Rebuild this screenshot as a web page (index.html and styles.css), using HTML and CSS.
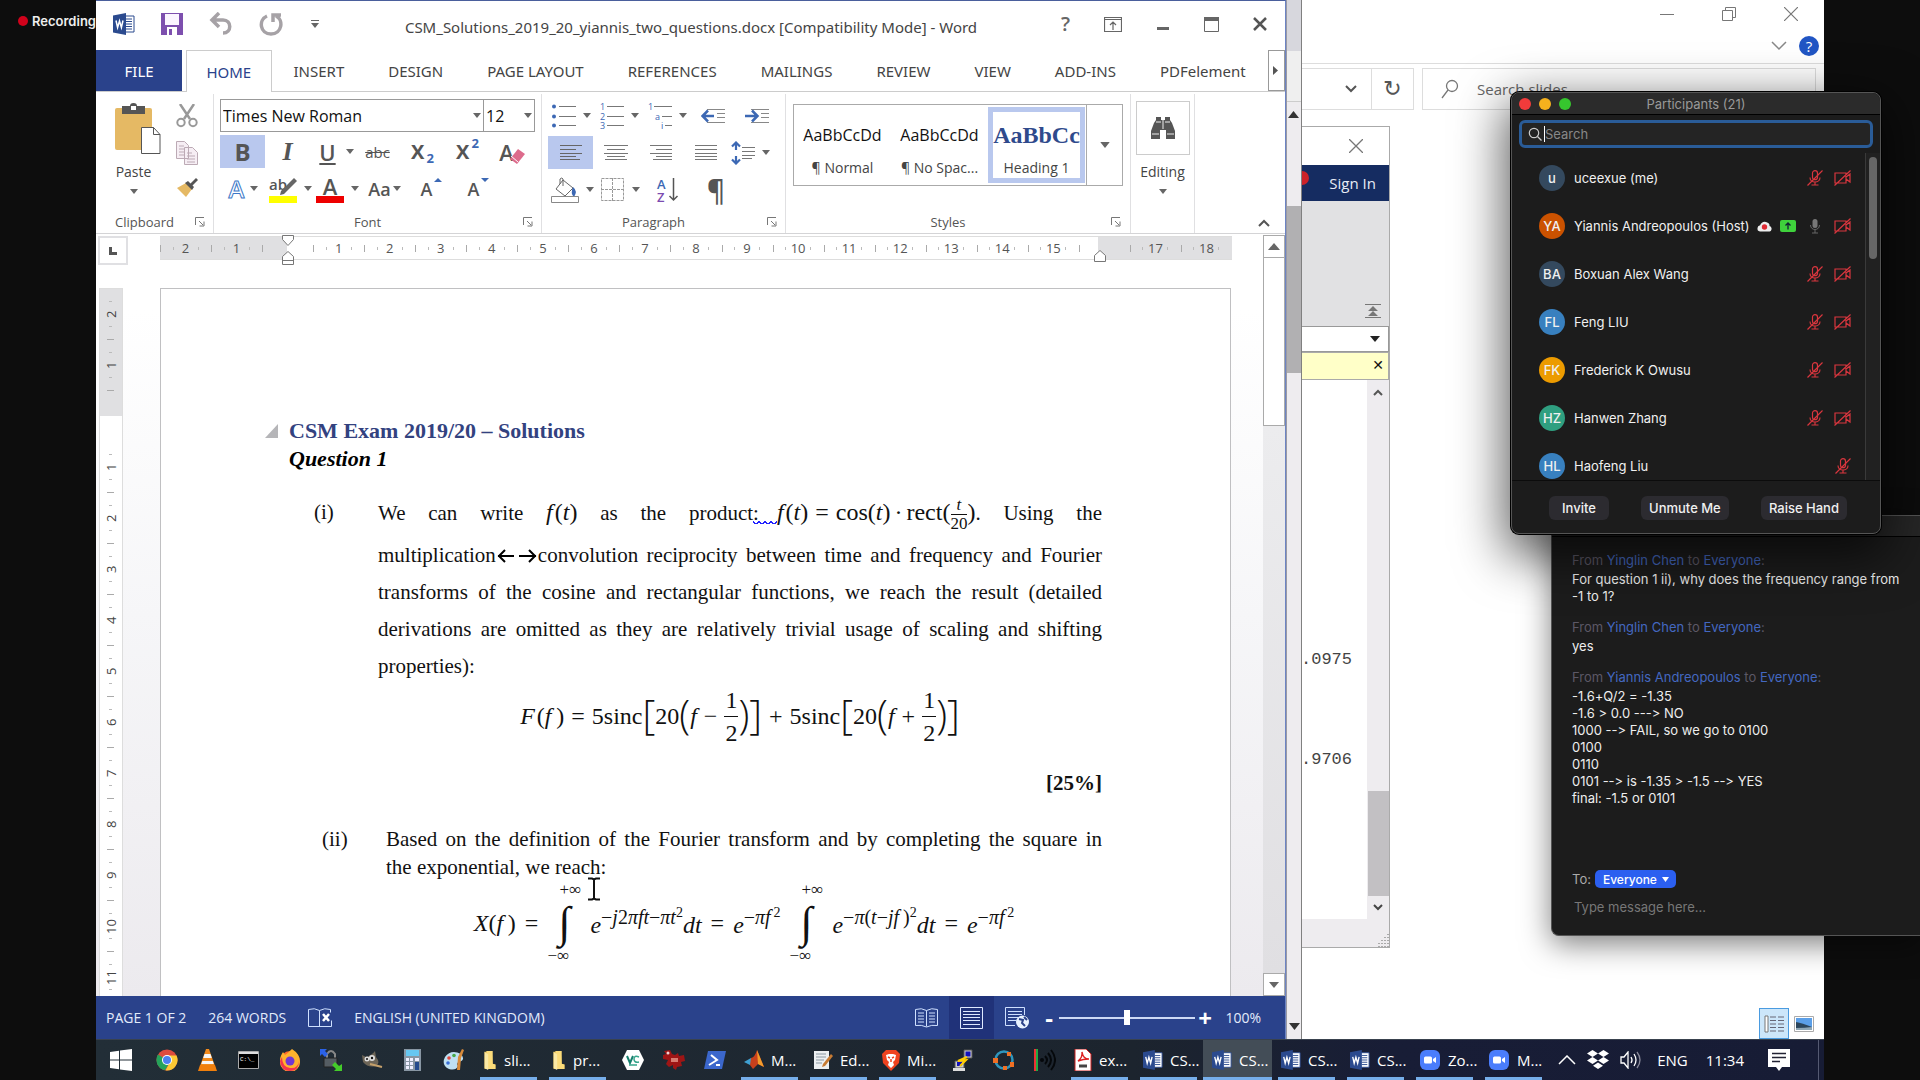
FILE: index.html
```html
<!DOCTYPE html>
<html lang="en">
<head>
<meta charset="utf-8">
<title>Shared screen</title>
<link rel="stylesheet" href="styles.css">
</head>
<body>
<svg width="0" height="0" class="defs" aria-hidden="true">
  <symbol id="down" viewBox="0 0 8 5"><path d="M0 0h8L4 5z" fill="#666"/></symbol>
  <symbol id="launch" viewBox="0 0 10 10"><path d="M.5 8V.5H9M4 4l4 4M9 4.500V9H4.500" fill="none" stroke="#777"/></symbol>
  <symbol id="word" viewBox="0 0 22 22"><path d="M12 3h9v16h-9z" fill="#fff" stroke="#2b4a8e"/><path d="M13 6h6M13 8.500h6M13 11h6M13 13.500h6M13 16h6" stroke="#2b4a8e"/><path d="M0 2.500 13 0v22L0 19.500z" fill="#2b4a8e"/><path d="M3 7.500l1.600 7L6.500 8l1.900 6.500 1.600-7" fill="none" stroke="#fff" stroke-width="1.500"/></symbol>
  <symbol id="folder" viewBox="0 0 14 22"><path d="M1 2h8l1 14h3v5H1z" fill="#e8b93f"/><path d="M3 1h7v14l3 1v5H3z" fill="#fbdc7a"/><path d="M1 2l4 3v17l-4-2z" fill="#fbe9a5"/></symbol>
  <symbol id="zoomapp" viewBox="0 0 22 22"><rect x="1" y="1" width="20" height="20" rx="6" fill="#4a7dfc"/><rect x="5" y="7.500" width="8" height="7" rx="1.500" fill="#fff"/><path d="M14 10l3-2v6l-3-2z" fill="#fff"/></symbol>
  <symbol id="micoff" viewBox="0 0 16 16"><g fill="none" stroke="#d9363e" stroke-width="1.200"><rect x="5.500" y=".7" width="5" height="9" rx="2.500"/><path d="M3 7.500c0 6 10 6 10 0M8 12v3M4.500 15h7M.5 15.500l15-15"/></g></symbol>
  <symbol id="vidoff" viewBox="0 0 17 16"><g fill="none" stroke="#d9363e" stroke-width="1.200"><path d="M1 3h11v10H1zM12 7l4-3v8l-4-3M.5 15.500l16-15"/></g></symbol>
</svg>

<aside class="rec"><span class="rec-dot"></span>Recording</aside>

<main class="desktop">
  <section class="win explorer">
    <header class="ex-title">
      <svg width="14" height="14"><path d="M0 7.500h14" stroke="#777"/></svg>
      <svg width="14" height="14"><path d="M.5 3.500h10v10H.5zM3.500 3V.5h10v10H11" fill="none" stroke="#777"/></svg>
      <svg width="14" height="14"><path d="M0 0l14 14M14 0L0 14" stroke="#777" stroke-width="1.200"/></svg>
    </header>
    <div class="ex-help">
      <svg width="16" height="10"><path d="M1 1l7 7 7-7" fill="none" stroke="#888" stroke-width="1.500"/></svg>
      <button class="help-dot">?</button>
    </div>
    <div class="ex-address">
      <div class="ex-path"><svg width="12" height="8"><path d="M1 1l5 5 5-5" fill="none" stroke="#555" stroke-width="2"/></svg></div>
      <button class="ex-refresh">↻</button>
      <label class="ex-search"><svg width="18" height="20"><circle cx="11" cy="7" r="5.500" fill="none" stroke="#777" stroke-width="1.300"/><path d="M7 11l-6 8" stroke="#777" stroke-width="1.300"/></svg><input type="text" value="Search slides" aria-label="Search slides"></label>
    </div>
    <footer class="ex-views">
      <span class="view-list"><svg width="20" height="20"><path d="M1 2h3v16H1z" fill="#fff" stroke="#777"/><path d="M6 3h6M14 3h6M6 6.500h6M14 6.500h6M6 10h6M14 10h6M6 13.500h6M14 13.500h6M6 17h6M14 17h6" stroke="#667"/></svg></span>
      <svg width="20" height="16"><path d="M.5.5h19v15H.5z" fill="#fff" stroke="#aaa"/><path d="M2 2h16v12H2z" fill="#5b9fe8"/><path d="M2 6q6 1 16 5v3H2z" fill="#2c465c"/><path d="M2 12q9 0 16-1v3H2z" fill="#8fa7b6"/></svg>
    </footer>
  </section>

  <section class="win matlab">
    <header class="ml-title"><svg width="14" height="14"><path d="M0 0l14 14M14 0L0 14" stroke="#777" stroke-width="1.300"/></svg></header>
    <div class="ml-sign"><i></i>Sign In</div>
    <div class="ml-tools"><svg width="16" height="14"><path d="M0 .5h16M0 13.500h16" stroke="#777"/><path d="M8 2l5 5H3zM8 7l5 5H3z" fill="#777"/></svg></div>
    <div class="ml-combo"><svg width="10" height="6"><path d="M0 0h10L5 6z" fill="#222"/></svg></div>
    <div class="ml-note">✕</div>
    <div class="ml-body">
      <div class="ml-out"><p>.0975</p><p>.9706</p></div>
      <div class="ml-scroll">
        <svg width="10" height="7"><path d="M1 6l4-4 4 4" fill="none" stroke="#555" stroke-width="2"/></svg>
        <span class="ml-thumb"></span>
        <svg width="10" height="7"><path d="M1 1l4 4 4-4" fill="none" stroke="#444" stroke-width="2"/></svg>
      </div>
    </div>
    <footer class="ml-foot"><svg width="14" height="14"><path d="M13 1v13M10 4v10M7 7v7M4 10v4" stroke="#aaa" stroke-width="2" stroke-dasharray="1 2"/></svg></footer>
  </section>

  <div class="win sliver">
    <span class="sl-a"></span><span class="sl-b"></span>
    <span class="sl-arrow"><svg width="11" height="7"><path d="M0 7h11L5.500 0z" fill="#333"/></svg></span>
    <span class="sl-thumb"></span><span class="sl-rest"></span>
    <svg width="11" height="7"><path d="M0 0h11L5.500 7z" fill="#333"/></svg>
  </div>

  <section class="win wordwin">
    <header class="w-title">
      <div class="qat">
        <svg width="22" height="22"><use href="#word"/></svg>
        <svg width="22" height="22"><path d="M0 0h22v22H0z" fill="#7d4fae"/><path d="M4 1h14v11H4z" fill="#fbf5ff"/><path d="M6 14h10v8H6z" fill="#fff"/><path d="M8 16h3v6H8z" fill="#7d4fae"/></svg>
        <svg width="24" height="24"><path d="M3 8h11c9 0 9 13 0 13M10 1L3 8l7 7" fill="none" stroke="#a6a2a6" stroke-width="3.500"/></svg>
        <svg width="24" height="24"><path d="M8 4C-1 8 1 22 12 22S25 8 17 4M14 10V3h8" fill="none" stroke="#a6a2a6" stroke-width="3.500"/></svg>
        <svg width="8" height="8" class="qat-more"><path d="M0 .5h8" stroke="#666"/><path d="M0 3h8L4 8z" fill="#666"/></svg>
      </div>
      <h1>CSM_Solutions_2019_20_yiannis_two_questions.docx [Compatibility Mode] - Word</h1>
      <div class="w-ctl">
        <span>?</span>
        <svg width="18" height="15"><path d="M.5.5h17v14H.5zM.5 2.500h17M9 13V5M6 8l3-3 3 3" fill="none" stroke="#666" stroke-width="1.200"/></svg>
        <svg width="14" height="15"><path d="M1 11.500h12" stroke="#666" stroke-width="3"/></svg>
        <svg width="15" height="15"><path d="M.5.5h14v14H.5z" fill="none" stroke="#666"/><path d="M0 0h15v4H0z" fill="#666"/></svg>
        <svg width="14" height="14"><path d="M1 1l12 12M13 1L1 13" stroke="#555" stroke-width="2.500"/></svg>
      </div>
    </header>
    <nav class="tabs">
      <button class="tab file">FILE</button><button class="tab home">HOME</button><button class="tab">INSERT</button><button class="tab">DESIGN</button><button class="tab">PAGE LAYOUT</button><button class="tab">REFERENCES</button><button class="tab">MAILINGS</button><button class="tab">REVIEW</button><button class="tab">VIEW</button><button class="tab">ADD-INS</button><button class="tab">PDFelement</button>
      <button class="tab-more" aria-label="More tabs"><svg width="6" height="9"><path d="M0 0v9l5-4.500z" fill="#555"/></svg></button>
    </nav>

    <div class="ribbon">
      <section class="group clip">
        <div class="g-body clip-body">
          <button class="big">
            <svg width="46" height="52"><rect x="0" y="5" width="37" height="42" rx="2" fill="#e5b964"/><path d="M7 3h8q0-3 3.500-3T22 3h8v8H7z" fill="#555"/><path d="M16 3h5v4h-5z" fill="#fff"/><path d="M26.500 24.500h12l6.500 7v19H26.500zM38.500 24.500v7H45" fill="#fff" stroke="#555"/></svg>
            <span>Paste</span><svg width="8" height="5"><use href="#down"/></svg>
          </button>
          <div class="clip-side">
            <svg width="22" height="24"><path d="M4 0l10 15M18 0L8 15" stroke="#999" stroke-width="2.500"/><circle cx="5" cy="18.500" r="3.700" fill="none" stroke="#999" stroke-width="2"/><circle cx="17" cy="18.500" r="3.700" fill="none" stroke="#999" stroke-width="2"/></svg>
            <svg width="22" height="24"><path d="M.5.5h8l4 4v13H.5zM8.500 6.500h8l5 5v12h-13z" fill="#f6eef4" stroke="#bcaab5"/><path d="M3 5h5M3 8h5M3 11h5M3 14h5M11 12h5M11 15h8M11 18h8M11 21h8" stroke="#bcaab5"/></svg>
            <svg width="22" height="20"><path d="M1 10l9-5 6 6-6 8z" fill="#e5b964"/><path d="M9 5l3-2 6 6-2 3z" fill="#555"/><path d="M14 6l6-6 2 2-6 6z" fill="#555"/></svg>
          </div>
        </div>
        <footer>Clipboard<svg width="10" height="10"><use href="#launch"/></svg></footer>
      </section>

      <section class="group font">
        <div class="g-body">
          <div class="combos">
            <div class="combo wide"><input type="text" value="Times New Roman" aria-label="Font"><svg width="8" height="5"><use href="#down"/></svg></div>
            <div class="combo"><input type="text" value="12" aria-label="Font size"><svg width="8" height="5"><use href="#down"/></svg></div>
          </div>
          <div class="tools t45">
            <button class="on gl b">B</button>
            <button class="gl i">I</button>
            <button class="gl u"><u>U</u><svg width="8" height="5"><use href="#down"/></svg></button>
            <button class="gl s"><s>abc</s></button>
            <button class="gl x">X<sub>2</sub></button>
            <button class="gl x">X<sup>2</sup></button>
            <button class="gl er">A<svg width="18" height="18"><path d="M10 2l7 5-8 10-7-5z" fill="#dd6b8c"/><path d="M3 9l7 6" stroke="#fff"/></svg></button>
          </div>
          <div class="tools t47">
            <button class="gl fx">A<svg width="8" height="5"><use href="#down"/></svg></button>
            <button><svg width="28" height="28" class="ic"><text x="0" y="15" class="abt">ab</text><path d="M25 3l3 3-13 13-4 1 1-4z" fill="#666"/><path d="M0 21h28v7H0z" fill="#ff0"/></svg><svg width="8" height="5"><use href="#down"/></svg></button>
            <button class="gl fc"><span>A</span><svg width="8" height="5"><use href="#down"/></svg></button>
            <button class="gl m">Aa<svg width="8" height="5"><use href="#down"/></svg></button>
            <button class="gl m">A<svg width="8" height="24"><path d="M0 5h8L4 1z" fill="#3c68b4"/></svg></button>
            <button class="gl m">A<svg width="8" height="24"><path d="M0 1h8L4 5z" fill="#3c68b4"/></svg></button>
          </div>
        </div>
        <footer>Font<svg width="10" height="10"><use href="#launch"/></svg></footer>
      </section>

      <section class="group para">
        <div class="g-body">
          <div class="tools t48 r1">
            <button><svg width="24" height="24"><path d="M7 2.500h17M7 12.500h17M7 21.500h17" stroke="#777"/><g fill="#3c68b4"><circle cx="2" cy="2.500" r="2"/><circle cx="2" cy="12.500" r="2"/><circle cx="2" cy="21.500" r="2"/></g></svg><svg width="8" height="5"><use href="#down"/></svg></button>
            <button><svg width="24" height="26" class="num"><path d="M7 3.500h17M7 13.500h17M7 22.500h17" stroke="#777"/><text x="0" y="7">1</text><text x="0" y="17">2</text><text x="0" y="26">3</text></svg><svg width="8" height="5"><use href="#down"/></svg></button>
            <button><svg width="24" height="26" class="num"><path d="M6 3.500h18M14 13.500h10M17 22.500h7" stroke="#777"/><text x="0" y="7">1</text><text x="7" y="17">a</text><text x="13" y="26">i</text></svg><svg width="8" height="5"><use href="#down"/></svg></button>
            <button class="n44"><svg width="24" height="16"><path d="M6 1.500h18M16 5.500h8M16 9.500h8M6 14.500h18" stroke="#888"/><path d="M13 8H2M7 2.500L1.500 8 7 13.500" fill="none" stroke="#3c68b4" stroke-width="2.500"/></svg></button>
            <button class="n44"><svg width="24" height="16"><path d="M6 1.500h18M16 5.500h8M16 9.500h8M6 14.500h18" stroke="#888"/><path d="M0 8h12M7 2.500L12.500 8 7 13.500" fill="none" stroke="#3c68b4" stroke-width="2.500"/></svg></button>
          </div>
          <div class="tools t45">
            <button class="on"><svg width="22" height="16"><path d="M0 .5h22M0 4.500h16M0 8.500h22M0 11.500h16M0 14.500h20" stroke="#666"/></svg></button>
            <button><svg width="24" height="16"><path d="M0 .5h24M3 4.500h18M0 8.500h24M3 11.500h18M1 14.500h22" stroke="#777"/></svg></button>
            <button><svg width="22" height="16"><path d="M0 .5h22M6 4.500h16M0 8.500h22M6 11.500h16M3 14.500h19" stroke="#777"/></svg></button>
            <button><svg width="22" height="16"><path d="M0 .5h22M0 4.500h22M0 8.500h22M0 11.500h22M0 14.500h22" stroke="#777"/></svg></button>
            <button><svg width="24" height="24"><path d="M11 6.500h13M11 10.500h13M11 14.500h13M11 17.500h10" stroke="#777"/><path d="M5 1v8M5 15v8M1 5.500L5 1.500l4 4M1 18.500l4 4 4-4" fill="none" stroke="#3c68b4" stroke-width="2.200"/></svg><svg width="8" height="5"><use href="#down"/></svg></button>
          </div>
          <div class="tools t48">
            <button><svg width="28" height="26"><path d="M12 3l10 8-8 8-9-7zM12 9V2q-1-2-3 0v5" fill="#fff" stroke="#666"/><path d="M22 10q5 4 1 10-4-3-1-10z" fill="#3c68b4"/><path d="M.5 19.500h27v6H.5z" fill="#fff" stroke="#888"/></svg><svg width="8" height="5"><use href="#down"/></svg></button>
            <button><svg width="24" height="24"><path d="M.5.5h22v22H.5zM11.500 0v23M0 11.500h23" fill="none" stroke="#999" stroke-dasharray="3 1"/></svg><svg width="8" height="5"><use href="#down"/></svg></button>
            <button><svg width="22" height="26" class="srt"><text x="0" y="12" fill="#3c68b4">A</text><text x="0" y="25" fill="#7b4bb0">Z</text><path d="M16.500 1v22M12.500 19l4 4 4-4" fill="none" stroke="#555" stroke-width="1.500"/></svg></button>
            <button class="gl pil">¶</button>
          </div>
        </div>
        <footer>Paragraph<svg width="10" height="10"><use href="#launch"/></svg></footer>
      </section>

      <section class="group styles">
        <div class="g-body">
          <div class="gallery">
            <button><b class="norm">AaBbCcDd</b><span>¶ Normal</span></button>
            <button><b class="norm">AaBbCcDd</b><span>¶ No Spac...</span></button>
            <button class="sel"><b>AaBbCc</b><span>Heading 1</span></button>
            <button class="g-more" aria-label="More styles"><svg width="10" height="6" viewBox="0 0 8 5"><use href="#down"/></svg></button>
          </div>
        </div>
        <footer>Styles<svg width="10" height="10"><use href="#launch"/></svg></footer>
      </section>

      <section class="group edit">
        <button class="big">
          <span class="bino"><svg width="24" height="22"><path d="M5 0h5v3h4V0h5v3l2 3 3 8v8h-9v-9H9v9H0v-8l3-8 2-3z" fill="#555"/><path d="M12 3v9M5 5h5M14 5h5M1 17h7M16 17h7" stroke="#eee"/></svg></span>
          <span>Editing</span><svg width="8" height="5"><use href="#down"/></svg>
        </button>
      </section>
      <button class="collapse" aria-label="Collapse ribbon"><svg width="12" height="8"><path d="M1 7l5-5 5 5" fill="none" stroke="#555" stroke-width="2"/></svg></button>
    </div>

    <div class="work">
      <div class="tabbox"><svg width="8" height="8"><path d="M1.500 0v6.500H8" fill="none" stroke="#555" stroke-width="3"/></svg></div>
      <div class="hruler"><div class="cells"><i class="g">2</i><i class="g">1</i><i class="g half"></i><i>1</i><i>2</i><i>3</i><i>4</i><i>5</i><i>6</i><i>7</i><i>8</i><i>9</i><i>10</i><i>11</i><i>12</i><i>13</i><i>14</i><i>15</i><i class="g end"></i><i class="g">17</i><i class="g">18</i></div>
        <svg class="mk mk-l" width="12" height="32"><path d="M.5.5h11v4L6 10.500.5 4.500zM6 16.500l5.500 5v8H.5v-8zM.5 25.500h11" fill="#fff" stroke="#777"/></svg>
        <svg class="mk mk-r" width="12" height="12"><path d="M6 .5l5.500 5v6H.5v-6z" fill="#fff" stroke="#777"/></svg>
      </div>
      <div class="vruler"><i class="g">2</i><i class="g">1</i><i class="half"></i><i>1</i><i>2</i><i>3</i><i>4</i><i>5</i><i>6</i><i>7</i><i>8</i><i>9</i><i>10</i><i>11</i></div>
      <article class="page">
        <h2><svg width="13" height="14"><path d="M13 0v14H0z" fill="#b5b5b8"/></svg>CSM Exam 2019/20 – Solutions</h2>
        <h3>Question 1</h3>
        <div class="item">
          <span class="mark">(i)</span>
          <div class="txt">
            <p class="j first">We can write <span class="m"><em>f</em>&hairsp;(<em>t</em>)</span> as the product<span class="wavy">:<span class="gap"></span></span><span class="m"><em>f</em>&hairsp;(<em>t</em>)<span class="op">=</span>cos(<em>t</em>)<span class="dot">·</span>rect(<span class="frac sm"><em>t</em><span>20</span></span>)</span>. Using the</p>
            <p class="j">multiplication<svg width="42" height="16"><path d="M2 8h16M9 2L3 8l6 6M23 8h17M33 2l6 6-6 6" fill="none" stroke="#000" stroke-width="2"/></svg>convolution reciprocity between time and frequency and Fourier</p>
            <p class="j">transforms of the cosine and rectangular functions, we reach the result (detailed</p>
            <p class="j">derivations are omitted as they are relatively trivial usage of scaling and shifting</p>
            <p>properties):</p>
          </div>
        </div>
        <div class="eq eq1">
          <span><em>F</em>&hairsp;(<em>f</em>&thinsp;)</span><span class="op">=</span><span>5sinc</span><span class="br">[</span><span>20</span><span class="br">(</span><em>f</em><span class="op">−</span><span class="frac"><span>1</span><span>2</span></span><span class="br">)</span><span class="br">]</span><span class="op">+</span><span>5sinc</span><span class="br">[</span><span>20</span><span class="br">(</span><em>f</em><span class="op">+</span><span class="frac"><span>1</span><span>2</span></span><span class="br">)</span><span class="br">]</span>
        </div>
        <p class="pct">[25%]</p>
        <div class="item two">
          <span class="mark">(ii)</span>
          <div class="txt">
            <p class="j">Based on the definition of the Fourier transform and by completing the square in</p>
            <p>the exponential, we reach:</p>
          </div>
        </div>
        <div class="eq eq2">
          <span><em>X</em>(<em>f</em>&thinsp;)</span><span>=</span>
          <span class="int"><small class="hi">+∞</small><b>∫</b><small class="lo">−∞</small></span>
          <span><em>e</em><sup>−<em>j</em>2<em>πft</em>−<em>πt</em><sup>2</sup></sup><em>dt</em></span><span>=</span>
          <span><em>e</em><sup>−<em>πf</em><sup>&thinsp;2</sup></sup></span>
          <span class="int"><small class="hi">+∞</small><b>∫</b><small class="lo">−∞</small></span>
          <span><em>e</em><sup>−<em>π</em>(<em>t</em>−<em>jf</em>&thinsp;)<sup>2</sup></sup><em>dt</em></span><span>=</span>
          <span><em>e</em><sup>−<em>πf</em><sup>&thinsp;2</sup></sup></span>
        </div>
        <svg class="ibeam" width="14" height="24"><path d="M1 1.500h4l2 1 2-1h4M7 2v20M1 22.500h4l2-1 2 1h4" fill="none" stroke="#111" stroke-width="2"/></svg>
      </article>
      <div class="vscroll">
        <span class="sb"><svg width="12" height="7"><path d="M0 7h12L6 0z" fill="#666"/></svg></span>
        <span class="sthumb"></span>
        <span class="strack"></span>
        <span class="sb"><svg width="10" height="6"><path d="M0 0h10L5 6z" fill="#666"/></svg></span>
      </div>
    </div>

    <footer class="status">
      <span>PAGE 1 OF 2</span><span>264 WORDS</span>
      <svg width="24" height="20"><path d="M11.500 2.500q-5-3-11-1v17h23v-6M11.500 2.500q5-3 11-1v3M11.500 2.500v16" fill="none" stroke="#cfe0ff"/><path d="M15 6l6 7M21 6l-6 7" stroke="#fff" stroke-width="2.500"/></svg>
      <span>ENGLISH (UNITED KINGDOM)</span>
      <div class="s-right">
        <button aria-label="Read mode"><svg width="24" height="20"><path d="M11.500 2.500q-5-3-11-1v16q6-1 11 1.500 5-2.500 11-1.500v-16q-6-2-11 1zv16M3 5h6M3 8h6M3 11h6M3 14h6M14 5h6M14 8h6M14 11h6M14 14h6" fill="none" stroke="#cfe0ff"/></svg></button>
        <button class="cur" aria-label="Print layout"><svg width="24" height="22"><path d="M.5.5h22v21H.5zM3 4.500h17M3 7.500h17M3 10.500h17M3 13.500h17M3 17.500h17" fill="none" stroke="#dfe9ff"/></svg></button>
        <button aria-label="Web layout"><svg width="24" height="22"><path d="M10 18.500H.5V.5h19V8M3 4.500h14M3 7.500h14M3 10.500h10M3 13.500h8" fill="none" stroke="#cfe0ff"/><circle cx="17.500" cy="15" r="6.500" fill="#e8f2ff"/><path d="M14 12l4 1-1 3 3 3M19 10l3 3" stroke="#2b428a" stroke-width="2" fill="none"/></svg></button>
        <span class="pm">-</span>
        <input type="range" min="0" max="100" value="50" aria-label="Zoom">
        <span class="pm">+</span><span class="zoomv">100%</span>
      </div>
    </footer>
  </section>

  <footer class="taskbar">
    <button class="start"><svg width="22" height="22"><path d="M0 3l9-1.300V10.500H0zM10 1.500L22 0v10.500H10zM0 11.500h9v8.800L0 19zM10 11.500h12V22l-12-1.500z" fill="#fff"/></svg></button>
    <button><svg width="22" height="22"><circle cx="11" cy="11" r="10.500" fill="#dd4b3e"/><path d="M11 11L2 5.500a10.500 10.500 0 0 0 7 15.800l5-8.300z" fill="#24a35a"/><path d="M11 11h0l3 2-4.500 8.400A10.500 10.500 0 0 0 20.500 6.500H11z" fill="#fcc934"/><circle cx="11" cy="11" r="5" fill="#fff"/><circle cx="11" cy="11" r="4" fill="#4a80f0"/></svg></button>
    <button><svg width="20" height="22"><path d="M8 0h3l6 17H2z" fill="#f28a1c"/><path d="M6.500 5h6l1.300 4h-8.600zM4.300 12h10.500l1 3H3.300z" fill="#f5f5f5"/><path d="M2 16h15l2 6H0z" fill="#f07f0c"/></svg></button>
    <button><svg width="21" height="18"><path d="M.5.5h20v17H.5z" fill="#000" stroke="#aaa"/><path d="M1 1h19v2H1z" fill="#ddd"/><text x="2" y="10" class="tiny">C:\_</text></svg></button>
    <button><svg width="22" height="22"><circle cx="11" cy="12" r="10" fill="#ff6a2b"/><path d="M13 0q8 5 8 13a10 10 0 0 1-20 0C1 7 3 5 4 3l2 3q3-2 7-6z" fill="#ffb22d"/><path d="M3 8q0 10 8 11t9-7q0 10-9 10T1 12z" fill="#f4364c"/><circle cx="11" cy="12" r="4.500" fill="#7037d4"/></svg></button>
    <button><svg width="22" height="22"><path d="M7 9V5q4-6 8 0v4" fill="none" stroke="#888" stroke-width="2"/><path d="M4 9h13v9H4z" fill="#555d63" stroke="#222"/><path d="M0 0h7L5 2l3 3-3 3-3-3-2 2z" fill="#2b62e8"/><path d="M22 22h-8l2-2-4-4 3-3 4 4 3-2z" fill="#44cc2a"/></svg></button>
    <button><svg width="22" height="20"><path d="M1 5l4 2q6-2 9-6l1 6q5 6 0 9-8 2-13-4z" fill="#6d6557"/><circle cx="6" cy="9" r="2.500" fill="#ddd"/><circle cx="11" cy="8" r="3" fill="#ddd"/><circle cx="6" cy="9" r="1" fill="#111"/><circle cx="11" cy="8" r="1.200" fill="#111"/><path d="M9 14l12 3" stroke="#c5a06b" stroke-width="2"/></svg></button>
    <button><svg width="17" height="22"><path d="M0 0h17v22H0z" fill="#8896a3"/><path d="M2 1h13v6H2z" fill="#67c7f1"/><path d="M2 9h3v3H2zM6 9h3v3H6zM2 13h3v3H2zM6 13h3v3H6zM2 17h3v3H2zM6 17h3v3H6zM11 9h4v3h-4z" fill="#eef"/><path d="M11 13h4v8h-4z" fill="#244a8c"/></svg></button>
    <button><svg width="22" height="22"><path d="M2 8Q8 0 18 5q5 6-2 8-3 1-1 4-2 5-9 3Q-2 16 2 8z" fill="#bfe0f2"/><circle cx="6" cy="9" r="1.800" fill="#e2483d"/><circle cx="11" cy="6.500" r="1.800" fill="#46a948"/><circle cx="5" cy="14" r="1.800" fill="#3a6fd8"/><path d="M14 21l1-13 4-8 2 1-3 8-1 12z" fill="#d98b3a"/></svg></button>
    <button class="task"><svg width="14" height="20" viewBox="0 0 14 22"><use href="#folder"/></svg>sli...</button>
    <button class="task"><svg width="14" height="20" viewBox="0 0 14 22"><use href="#folder"/></svg>pr...</button>
    <button><svg width="22" height="20"><path d="M5 0h12l5 10-5 10H5L0 10z" fill="#fff"/><path d="M5 6l3 7 3-7" fill="none" stroke="#16806d" stroke-width="2"/><path d="M17 7q-5-2-5 2t5 3M7 15h8" fill="none" stroke="#36a58c" stroke-width="1.500"/></svg></button>
    <button><svg width="22" height="22"><path d="M1 2l6-1 2 4 3 1 3-2 1 3 5-1 1 6-4 1 1 4-5 1-1 3-3-2 0-3-4 2-3-3 2-4-5-1 0-4 3-1z" fill="#9e1515"/><circle cx="5" cy="4" r="1.500" fill="#f3d3d3"/><path d="M8 9h7v4H8z" fill="#d87a70"/></svg></button>
    <button><svg width="22" height="18"><path d="M4 0h18l-4 18H0z" fill="#3b67cc"/><path d="M7 4l6 5-8 5M12 14h4" fill="none" stroke="#fff" stroke-width="2"/></svg></button>
    <button class="task"><svg width="20" height="20"><path d="M0 12l7-4 3 4-4 3z" fill="#3fa0d2"/><path d="M7 8q4-1 6-8l7 17-6-3-5 5-3-4z" fill="#c8401c"/><path d="M13 0l7 17-6-3z" fill="#f39c2c"/></svg>M...</button>
    <button class="task"><svg width="20" height="20"><path d="M1 1h15v18H1z" fill="#eceff1"/><path d="M3 4h10M3 7h10M3 10h8M3 13h6" stroke="#8a98a3"/><path d="M18 4l2 2-8 10-3 1 1-3z" fill="#c77b33"/></svg>Ed...</button>
    <button class="task"><svg width="18" height="22"><path d="M4 1h10l4 4-1 9-8 8-8-8L0 5z" fill="#f0431f"/><path d="M4 6l3-1h4l3 1-1 5-2 2 1 3-3 3-3-3 1-3-2-2z" fill="#fff"/><path d="M6 8l2 1M12 8l-2 1M9 10v3" stroke="#f0431f" stroke-width="1.500"/></svg>Mi...</button>
    <button><svg width="20" height="22"><path d="M11 1h8v8h-8zM2 12h9v7H2z" fill="#ccc" stroke="#555"/><path d="M12.500 2.500h5v5h-5zM4 13h5v4H4z" fill="#11b"/><path d="M0 19h12v3H0z" fill="#ddd"/><path d="M14 8l-9 4 8-1-6 6" fill="none" stroke="#fc0" stroke-width="2"/></svg></button>
    <button><svg width="22" height="22"><circle cx="11" cy="11" r="8.500" fill="none" stroke="#2f95bc" stroke-width="2.500"/><path d="M0 9h5v5H0zM14 3h4v4h-4zM17 13h4v5h-4zM10 17h4v4h-4z" fill="#ef6f24"/></svg></button>
    <button><svg width="22" height="22"><path d="M1 0v22" stroke="#e33" stroke-width="2"/><path d="M3 0v22" stroke="#2a4" stroke-width="2"/><circle cx="8" cy="11" r="2" fill="#05080b"/><path d="M11 7q4 4 0 8M14 4q6 7 0 14M17 1q8 10 0 20" fill="none" stroke="#05080b" stroke-width="2"/></svg></button>
    <button class="task"><svg width="18" height="22"><path d="M1 0h11l5 5v17H1z" fill="#fff" stroke="#c22"/><path d="M4 12q5-4 4-9 1 7 7 7-6 0-11 2z" fill="none" stroke="#d22" stroke-width="1.500"/><path d="M5 17h8" stroke="#444" stroke-width="3"/></svg>ex...</button>
    <button class="task"><svg width="20" height="22" viewBox="0 0 22 22"><use href="#word"/></svg>CS...</button>
    <button class="task act"><svg width="20" height="22" viewBox="0 0 22 22"><use href="#word"/></svg>CS...</button>
    <button class="task"><svg width="20" height="22" viewBox="0 0 22 22"><use href="#word"/></svg>CS...</button>
    <button class="task"><svg width="20" height="22" viewBox="0 0 22 22"><use href="#word"/></svg>CS...</button>
    <button class="task"><svg width="22" height="22"><use href="#zoomapp"/></svg>Zo...</button>
    <button class="task"><svg width="22" height="22"><use href="#zoomapp"/></svg>M...</button>
    <div class="tray">
      <svg width="18" height="10"><path d="M1 9l8-8 8 8" fill="none" stroke="#fff" stroke-width="1.500"/></svg>
      <svg width="22" height="20"><path d="M5.500 0L11 3.500 5.500 7 0 3.500zM16.500 0L22 3.500 16.500 7 11 3.500zM5.500 7L11 10.500 5.500 14 0 10.500zM16.500 7L22 10.500 16.500 14 11 10.500zM11 12.500l5 3.200-5 3.300-5-3.300z" fill="#fff"/></svg>
      <svg width="22" height="18"><path d="M1 6h3l4-5v16l-4-5H1z" fill="none" stroke="#fff" stroke-width="1.300"/><path d="M11 6q2 3 0 6M14 3q4 6 0 12" fill="none" stroke="#fff" stroke-width="1.300"/><path d="M17 1q6 8 0 16" fill="none" stroke="#889" stroke-width="1.300"/></svg>
      <span>ENG</span><span>11:34</span>
      <svg width="22" height="22"><path d="M0 0h22v18h-8l-3 4-3-4H0z" fill="#fff"/><path d="M4 4.500h14M4 8.500h14M4 12.500h8" stroke="#223" stroke-width="1.500"/></svg>
    </div>
  </footer>
</main>

<section class="chat">
  <header></header>
  <div class="log">
    <p class="from">From <a href="#">Yinglin Chen</a> to <a href="#">Everyone</a>:</p>
    <p class="msg">For question 1 ii), why does the frequency range from<br>-1 to 1?</p>
    <p class="from">From <a href="#">Yinglin Chen</a> to <a href="#">Everyone</a>:</p>
    <p class="msg">yes</p>
    <p class="from">From <a href="#">Yiannis Andreopoulos</a> to <a href="#">Everyone</a>:</p>
    <p class="msg">-1.6+Q/2 = -1.35<br>-1.6 &gt; 0.0 ---&gt; NO<br>1000 --&gt; FAIL, so we go to 0100<br>0100<br>0110<br>0101 --&gt; is -1.35 &gt; -1.5 --&gt; YES<br>final: -1.5 or 0101</p>
  </div>
  <div class="to">To: <button>Everyone <svg width="7" height="5"><path d="M0 0h7L3.500 5z" fill="#fff"/></svg></button></div>
  <input class="compose" type="text" placeholder="Type message here..." aria-label="Message">
</section>

<section class="people">
  <header><span class="lights"><i class="r"></i><i class="y"></i><i class="gr"></i></span><h2>Participants (21)</h2></header>
  <label class="p-search"><svg width="14" height="15"><circle cx="6" cy="6" r="4.700" fill="none" stroke="#ccc" stroke-width="1.200"/><path d="M9.500 9.500l4 4" stroke="#ccc" stroke-width="1.200"/></svg><span class="caret"></span><input type="text" placeholder="Search" aria-label="Search participants"></label>
  <div class="p-body">
    <ul>
      <li><b class="av navy">u</b><span>uceexue (me)</span><svg width="16" height="16"><use href="#micoff"/></svg><svg width="17" height="16"><use href="#vidoff"/></svg></li>
      <li><b class="av org">YA</b><span>Yiannis Andreopoulos (Host)</span><svg width="15" height="11" class="cl"><path d="M3 10.500Q0 10 .5 7T3 4.500Q5 0 9 1t3.500 4Q15 6 14.500 8.500T12 10.500z" fill="#eee"/><circle cx="7.500" cy="6" r="2.700" fill="#e02b35"/></svg><svg width="16" height="12" class="sh"><rect width="16" height="12" rx="2" fill="#3fd23c"/><path d="M8 9.500V3M5.500 5.500L8 3l2.500 2.500" fill="none" stroke="#123" stroke-width="1.300"/></svg><svg width="16" height="16"><rect x="5.500" y="1" width="5" height="9" rx="2.500" fill="#777"/><path d="M3.500 7c0 6 9 6 9 0M8 12v3M5 15h6" fill="none" stroke="#666"/></svg><svg width="17" height="16"><use href="#vidoff"/></svg></li>
      <li><b class="av navy">BA</b><span>Boxuan Alex Wang</span><svg width="16" height="16"><use href="#micoff"/></svg><svg width="17" height="16"><use href="#vidoff"/></svg></li>
      <li><b class="av blue">FL</b><span>Feng LIU</span><svg width="16" height="16"><use href="#micoff"/></svg><svg width="17" height="16"><use href="#vidoff"/></svg></li>
      <li><b class="av amb">FK</b><span>Frederick K Owusu</span><svg width="16" height="16"><use href="#micoff"/></svg><svg width="17" height="16"><use href="#vidoff"/></svg></li>
      <li><b class="av grn">HZ</b><span>Hanwen Zhang</span><svg width="16" height="16"><use href="#micoff"/></svg><svg width="17" height="16"><use href="#vidoff"/></svg></li>
      <li><b class="av blue">HL</b><span>Haofeng Liu</span><svg width="16" height="16"><use href="#micoff"/></svg></li>
    </ul>
    <div class="p-scroll"><i></i></div>
  </div>
  <footer><button>Invite</button><button>Unmute Me</button><button>Raise Hand</button></footer>
</section>
</body>
</html>
```
FILE: styles.css
```css
* { box-sizing: border-box; }
body {
  margin: 0;
  height: 100vh;
  display: flex;
  position: relative;
  overflow: hidden;
  background: #0d0d0d;
  font: 14px/20px "Open Sans", "Noto Sans", sans-serif;
  color: #444;
}
h1, h2, h3, p, ul { margin: 0; padding: 0; font-weight: normal; }
button { border: 0; background: none; padding: 0; margin: 0; font: inherit; color: inherit; }
input { border: 0; background: none; padding: 0; margin: 0; font: inherit; color: inherit; min-width: 0; outline: 0; }
svg { flex: none; display: block; }
.defs { position: absolute; }
a { text-decoration: none; }

.rec { width: 96px; flex: none; padding: 12px 0 0 18px; font: 600 13px/18px Inter, sans-serif; color: #eee; display: flex; align-items: flex-start; gap: 4px; }
.rec-dot { width: 10px; height: 10px; margin-top: 4px; border-radius: 50%; background: #d0021b; flex: none; }

.desktop { flex: 1; min-width: 0; margin-right: 96px; position: relative; display: flex; flex-direction: column; justify-content: flex-end; background: #fff; }
.win { position: absolute; top: 0; bottom: 41px; background: #fff; }

/* File explorer */
.explorer { right: 0; width: 523px; display: flex; flex-direction: column; }
.ex-title { display: flex; justify-content: flex-end; gap: 48px; padding: 7px 26px 0 0; height: 33px; }
.ex-help { display: flex; justify-content: flex-end; align-items: center; gap: 12px; height: 30px; padding: 0 5px 4px 0; }
.help-dot { width: 20px; height: 20px; border-radius: 50%; background: #2155c4; color: #fff; font-size: 15px; line-height: 20px; }
.ex-address { display: flex; border-top: 1px solid #ddd; padding: 4px 8px 0 0; height: 47px; }
.ex-path { width: 71px; border: 1px solid #ddd; border-left: 0; display: flex; align-items: center; justify-content: flex-end; padding-right: 14px; }
.ex-refresh { width: 42px; border: 1px solid #ddd; border-left: 0; font: 22px/40px "DejaVu Sans", sans-serif; color: #555; }
.ex-search { flex: 1; margin-left: 8px; border: 1px solid #ddd; display: flex; align-items: center; gap: 18px; padding-left: 18px; font-size: 15px; color: #666; }
.ex-search input { flex: 1; }
.ex-views { margin-top: auto; display: flex; justify-content: flex-end; align-items: center; gap: 5px; padding-right: 10px; }
.view-list { width: 30px; height: 31px; border: 1px solid #4a9be0; background: #cce6fa; display: flex; align-items: center; justify-content: center; }

/* Window behind */
.matlab { top: 126px; bottom: 132px; right: 434px; width: 89px; border: 1px solid #aaa; border-left: 0; display: flex; flex-direction: column; overflow: hidden; }
.ml-title { height: 38px; flex: none; display: flex; align-items: center; justify-content: flex-end; padding-right: 26px; }
.ml-sign { height: 36px; flex: none; background: #152c61; color: #e8ecf5; font-size: 15px; line-height: 36px; text-align: right; padding-right: 13px; position: relative; }
.ml-sign i { position: absolute; left: -6px; top: 6px; width: 14px; height: 14px; border-radius: 50%; background: #cc2229; }
.ml-tools { height: 125px; flex: none; background: #e1e1e3; display: flex; justify-content: flex-end; align-items: flex-end; padding: 0 8px 8px 0; }
.ml-combo { height: 26px; flex: none; border: 1px solid #999; display: flex; justify-content: flex-end; align-items: center; padding-right: 8px; }
.ml-note { height: 28px; flex: none; background: #ffffc8; border: 1px solid #aaa; color: #111; font: bold 14px/24px "DejaVu Sans", sans-serif; text-align: right; padding-right: 4px; }
.ml-body { flex: 1; display: flex; min-height: 0; }
.ml-out { flex: 1; font: 17px/100px "Liberation Mono", monospace; color: #444; padding-top: 230px; }
.ml-scroll { width: 22px; background: #eeecef; display: flex; flex-direction: column; align-items: center; padding: 9px 0 8px; }
.ml-thumb { width: 21px; height: 105px; background: #c2c0c3; margin: auto 0 8px; }
.ml-foot { height: 28px; flex: none; background: #eeecef; display: flex; align-items: flex-end; justify-content: flex-end; }

.sliver { right: 522px; width: 17px; background: #eeecef; border-right: 1px solid #808080; border-left: 2px solid #9a9aa4; display: flex; flex-direction: column; align-items: center; padding-bottom: 9px; }
.sliver span { width: 100%; flex: none; }
.sl-a { height: 51px; background: #d7d7dd; }
.sl-b { height: 51px; background: #efefef; border-bottom: 1px solid #ccc; }
.sliver .sl-arrow { height: 104px; padding: 9px 0 0 1px; }
.sl-thumb { height: 167px; background: #b1b0b2; }
.sliver .sl-rest { flex: 1; }

/* Word window */
.wordwin { left: 0; right: 538px; display: flex; flex-direction: column; border-top: 1px solid #4a5f9c; border-right: 1px solid #6c84c4; }
.w-title { height: 49px; flex: none; display: flex; align-items: flex-start; padding: 11px 18px 0 17px; }
.qat { display: flex; align-items: center; gap: 26px; width: 260px; height: 24px; }
.qat-more { margin-left: 2px; }
.w-title h1 { flex: 1; text-align: center; font: 15px/30px "Noto Sans", sans-serif; white-space: nowrap; padding-right: 52px; }
.w-ctl { display: flex; align-items: center; justify-content: space-between; width: 206px; height: 24px; font-size: 20px; font-weight: 600; color: #666; }
.tabs { height: 42px; flex: none; display: flex; border-bottom: 1px solid #ccc; }
.tab { padding: 0 22px; color: #444; white-space: nowrap; height: 41px; font: 15px/20px "Noto Sans", sans-serif; }
.tab.file { width: 88px; background: #2a428b; color: #fff; margin-right: 4px; }
.tab.home { width: 89px; border: 1px solid #ccc; border-bottom: 0; background: #fff; color: #2a428b; height: 42px; padding: 0; }
.tab-more { width: 18px; margin-left: auto; border: 1px solid #999; display: flex; align-items: center; justify-content: center; }

.ribbon { height: 142px; flex: none; display: flex; border-bottom: 1px solid #d4d4d6; padding: 2px 0 0; position: relative; }
.group { border-right: 1px solid #e0e0e2; display: flex; flex-direction: column; justify-content: space-between; padding: 5px 6px 0; }
.group footer { height: 22px; font-size: 13px; line-height: 22px; color: #555; text-align: center; display: flex; justify-content: center; position: relative; padding-right: 20px; }
.group footer svg { position: absolute; right: 2px; top: 6px; }
.clip { width: 118px; }
.clip-body { display: flex; gap: 24px; padding: 4px 0 0 13px; }
.big { display: flex; flex-direction: column; align-items: center; }
.big > span { line-height: 34px; }
.clip .big > svg:first-child { margin-right: -9px; }
.clip-side { display: flex; flex-direction: column; gap: 13px; padding-top: 1px; }
.font { width: 328px; }
.combos { display: flex; }
.combo { width: 52px; height: 33px; border: 1px solid #999; display: flex; align-items: center; padding: 0 2px; margin-left: -1px; font-size: 16px; color: #111; }
.combo input { flex: 1; }
.combo.wide { width: 265px; margin-left: 0; }
.tools { display: flex; height: 33px; margin-top: 3px; }
.tools + .tools { margin-top: 4px; }
.tools button { display: flex; align-items: center; justify-content: center; gap: 7px; height: 33px; }
.t45 button { width: 45px; }
.t47 button { width: 47px; }
.t48 button { width: 48px; }
.t48 .n44 { width: 44px; }
.tools.r1 { margin-top: 0; }
.on { background: #b9c8ee; }
.gl { font-weight: 600; font-size: 22px; line-height: 30px; color: #555; }
.tools .gl { gap: 2px; }
.gl.b { font-weight: 700; font-size: 24px; }
.gl.i { font: italic 700 26px/26px "Liberation Serif", serif; }
.tools .gl.u { gap: 10px; padding-left: 8px; }
.gl.s { font-size: 15px; font-weight: 400; }
.gl.x { font-size: 20px; font-weight: 700; }
.gl sub, .gl sup { font-size: 13px; line-height: 13px; color: #3c68b4; }
.gl sub { margin-top: 14px; }
.gl sup { margin-bottom: 16px; }
.tools .gl.er { gap: 0; }
.gl.er svg { margin: 8px 0 0 -6px; }
.tools .gl.fx { color: #fff; -webkit-text-stroke: 1px #3c78c8; gap: 6px; font-size: 24px; }
.abt { font: 600 15px "Open Sans", sans-serif; fill: #555; }
.tools .gl.fc { gap: 7px; }
.gl.fc span { width: 28px; height: 28px; line-height: 22px; border-bottom: 7px solid #e00; }
.gl.m { font-size: 18px; }
.num, .srt { overflow: visible; }
.num text { font: 9px "Open Sans", sans-serif; fill: #3c68b4; }
.srt text { font: 600 13px "Open Sans", sans-serif; }
.gl.pil { font-size: 28px; }
.para { width: 244px; }
.styles { width: 345px; padding: 10px 7px 0; }
.gallery { display: flex; height: 82px; border: 1px solid #aaa; }
.gallery button { width: 97px; overflow: hidden; padding-top: 17px; display: flex; flex-direction: column; align-items: center; gap: 10px; white-space: nowrap; }
.gallery b { font: 24px/26px "Liberation Serif", serif; font-weight: 700; color: #2f4a8c; }
.gallery b.norm { font: 16px/26px "Open Sans", sans-serif; color: #111; }
.gallery .sel { border: 5px solid #b9c8ee; margin: 2px 0; padding-top: 10px; }
.gallery .g-more { flex: 1; width: auto; border-left: 1px solid #aaa; justify-content: center; padding: 0; margin-left: 1px; }
.edit { width: 64px; justify-content: flex-start; padding: 7px 4px 0; }
.bino { width: 54px; height: 54px; border: 1px solid #ccc; display: flex; align-items: center; justify-content: center; }
.collapse { position: absolute; right: 15px; bottom: 6px; }

/* Document work area */
.work { flex: 1; min-height: 0; display: grid; grid-template-columns: 28px 36px 1fr 32px 22px; grid-template-rows: 31px 22px 1fr; background: linear-gradient(#fff 10%, #f6f6f8 50%, #eceaee); }
.tabbox { grid-area: 1 / 1 / 2 / 2; margin: 2px 0 0 2px; border: 2px solid #e0e0e3; width: 30px; height: 29px; display: flex; align-items: center; justify-content: center; background: #fff; }
.hruler { grid-area: 1 / 3 / 2 / 4; margin: 2px -1px 4px 0; position: relative; }
.cells { display: flex; height: 24px; border-top: 1px solid #ddd; border-bottom: 1px solid #ddd; background: #fff; overflow: hidden; }
.cells i { flex: 1; text-align: center; font: 13px/22px "Open Sans", sans-serif; color: #555;
  background: linear-gradient(#aaa, #aaa) 0 50%/1px 7px, linear-gradient(#bbb, #bbb) 25% 50%/1px 3px, linear-gradient(#bbb, #bbb) 75% 50%/1px 3px; background-repeat: no-repeat; }
.cells .g, .vruler .g { background-color: #e0e0e2; }
.cells .half { background-image: linear-gradient(#aaa, #aaa), linear-gradient(90deg, transparent 50%, #fff 50%); background-position: 0 50%, 0 0; background-size: 1px 7px, 100% 100%; }
.cells .end { background-image: linear-gradient(#aaa, #aaa), linear-gradient(90deg, #fff 38%, transparent 38%); background-position: 0 50%, 0 0; background-size: 1px 7px, 100% 100%; }
.mk { position: absolute; }
.mk-l { left: 12%; margin-left: -7px; top: -1px; }
.mk-r { right: 12%; margin-right: -3px; top: 14px; }
.vruler { grid-area: 3 / 1 / 4 / 2; margin: 1px 0 0 3px; width: 24px; border: 1px solid #ddd; border-bottom: 0; overflow: hidden; background: #fff; }
.vruler i { display: flex; align-items: center; justify-content: center; width: 100%; height: 51px; writing-mode: vertical-rl; rotate: 180deg; font: 13px/22px "Open Sans", sans-serif; color: #444;
  background: linear-gradient(#aaa, #aaa) 50% 0/7px 1px, linear-gradient(#bbb, #bbb) 50% 25%/3px 1px, linear-gradient(#bbb, #bbb) 50% 75%/3px 1px; background-repeat: no-repeat; }
.vruler .half { background: linear-gradient(#fff 50%, #e0e0e2 50%); }
.page { grid-area: 3 / 3 / 4 / 4; margin-top: 1px; border: 1px solid #c0c0c2; border-bottom: 0; background: #fff; padding: 128px 128px 0; overflow: hidden; position: relative; font: 21px/28px "Liberation Serif", serif; color: #111; }
.page h2 { font-size: 22px; font-weight: 700; color: #33427f; display: flex; align-items: center; gap: 11px; margin-left: -24px; }
.page h3 { font-size: 22px; font-weight: 700; font-style: italic; color: #000; }
.item { display: flex; margin-top: 14px; }
.mark { width: 89px; flex: none; padding-left: 25px; }
.txt { flex: 1; line-height: 37px; }
.txt p { white-space: nowrap; }
.txt .j { text-align-last: justify; }
.item .first { height: 50px; line-height: 50px; }
.item .mark { line-height: 50px; }
.two { margin-top: 28px; }
.two .txt, .item.two .mark { line-height: 28px; }
.two .mark { width: 97px; padding-left: 33px; }
.txt svg { display: inline-block; vertical-align: -2px; }
.gap { display: inline-block; width: 18px; }
.wavy { background: radial-gradient(circle at 3px 0, transparent 2px, #22f 2px, #22f 3px, transparent 3px) 0 100%/6px 4px repeat-x; }
.m { white-space: nowrap; font-size: 24px; }
.dot { margin: 0 4px; }
.frac { display: inline-flex; flex-direction: column; align-items: center; line-height: 32px; vertical-align: middle; }
.frac > :first-child { border-bottom: 1px solid #111; padding: 0 1px; }
.frac.sm { font-size: 17px; line-height: 18px; }
.frac.sm > :first-child { padding: 0 6px; }
.eq { display: flex; align-items: center; justify-content: center; font-size: 24px; }
.op { margin: 0 7px; }
.eq1 { height: 62px; padding-left: 89px; }
.eq1 .br { font: 300 40px/44px "Open Sans", sans-serif; padding-bottom: 4px; }
.pct { font-weight: 700; text-align: right; margin-top: 22px; }
.eq2 { height: 84px; gap: 9px; padding-left: 97px; }
.eq2 sup { font-size: 20px; line-height: 10px; vertical-align: 9px; }
.eq2 sup sup { font-size: 14px; vertical-align: 7px; }
.int { display: flex; flex-direction: column; align-items: center; width: 34px; }
.int b { font: 44px/50px "Liberation Serif", serif; }
.int small { font-size: 17px; line-height: 16px; }
.int .hi { padding-left: 12px; }
.int .lo { padding-right: 12px; }
.ibeam { position: absolute; left: 426px; top: 588px; }
.vscroll { grid-area: 1 / 5 / 4 / 6; display: flex; flex-direction: column; margin-top: 1px; }
.sb { height: 23px; border: 1px solid #aaa; background: #fff; display: flex; align-items: center; justify-content: center; flex: none; }
.sthumb { height: 168px; border: 1px solid #aaa; border-top: 0; background: #fff; flex: none; }
.strack { flex: 1; background: linear-gradient(#ececee, #e0dfe2); }

.status { height: 43px; flex: none; background: #2a428b; color: #e3ebfb; display: flex; align-items: center; padding-left: 10px; gap: 22px; white-space: nowrap; }
.s-right { margin-left: auto; display: flex; align-items: center; height: 100%; padding-right: 24px; }
.s-right button { width: 45px; height: 100%; display: flex; align-items: center; justify-content: center; }
.s-right .cur { background: #203279; }
.pm { font-size: 24px; font-weight: 700; width: 20px; text-align: center; color: #fff; }
.s-right input { appearance: none; width: 136px; height: 20px; background: linear-gradient(#cdd9f5, #cdd9f5) 50% 50%/100% 2px no-repeat; }
.s-right input::-webkit-slider-thumb { appearance: none; width: 6px; height: 15px; background: #fff; }
.zoomv { width: 46px; text-align: right; }

/* Taskbar */
.taskbar { height: 41px; display: flex; background: linear-gradient(90deg, #222e37, #1c242e 60%, #181d36 75%, #171c35); color: #fff; font-size: 15px; border-top: 1px solid #39424e; }
.taskbar button { width: 41px; display: flex; align-items: center; justify-content: center; flex: none; }
.taskbar .start { width: 50px; }
.taskbar .task { width: 69px; gap: 7px; justify-content: flex-start; padding-left: 9px; background: linear-gradient(#76aeea, #76aeea) 50% 100%/57px 3px no-repeat; }
.taskbar .act { background-color: #434d57; background-size: 100% 3px; }
.tiny { font: 6px "Liberation Mono", monospace; fill: #fff; }
.tray { margin-left: auto; display: flex; align-items: center; gap: 15px; padding-right: 28px; margin-right: 5px; border-right: 1px solid #555a72; }
.tray svg + svg { margin-left: -4px; }
.tray span + span { margin-left: 3px; }
.tray span + svg { margin-left: 9px; }

/* Chat panel */
.chat { position: absolute; right: 0; top: 515px; width: 369px; height: 421px; background: #1c1c1c; border: 1px solid #555; border-right: 0; border-radius: 8px 0 0 8px; box-shadow: 0 8px 30px rgba(0,0,0,.5); padding: 0 0 0 20px; font: 13px/17px Inter, sans-serif; font-feature-settings: "calt" 0; color: #eee; display: flex; flex-direction: column; }
.chat header { height: 21px; border-bottom: 1px solid #000; margin-left: -20px; background: #262626; border-radius: 8px 0 0 0; }
.log { padding-top: 15px; flex: 1; }
.from { color: #5c5866; margin-bottom: 2px; }
.from a { color: #4468c0; }
.msg { margin-bottom: 14px; white-space: nowrap; }
.to { color: #aaa; display: flex; align-items: center; gap: 4px; }
.to button { background: #2b5ff0; color: #fff; border-radius: 5px; height: 18px; padding: 0 7px 0 8px; display: flex; align-items: center; gap: 5px; font-weight: 500; font-size: 12px; }
.compose { margin: 9px 0 18px 2px; height: 20px; }
.compose::placeholder { color: #777; }

/* Participants panel */
.people { position: absolute; right: 39px; top: 92px; width: 370px; background: #1c1c1c; border: 1px solid #555; border-radius: 8px; box-shadow: 0 0 0 1px #000, 0 16px 50px 6px rgba(0,0,0,.65); font: 500 13px/18px Inter, sans-serif; color: #f0f0f0; }
.people header { height: 22px; display: grid; grid-template-columns: 1fr auto 1fr; align-items: center; background: #2b2b2b; border-bottom: 1px solid #000; border-radius: 8px 8px 0 0; padding: 0 7px; }
.people h2 { font-size: 13px; color: #999; }
.lights { display: flex; gap: 8px; }
.lights i { width: 12px; height: 12px; border-radius: 50%; }
.r { background: #f23b3b; }
.y { background: #f5b11d; }
.gr { background: #36c62e; }
.p-search { margin: 5px 7px 0; height: 28px; border: 3px solid #2a5c98; border-radius: 6px; display: flex; align-items: center; padding-left: 6px; background: #242424; font-weight: 400; }
.caret { width: 1px; height: 16px; background: #fff; margin-left: 2px; }
.p-search input::placeholder { color: #888; }
.p-body { display: flex; height: 328px; border-bottom: 1px solid #0c0c0c; margin-top: 5px; overflow: hidden; }
.p-body ul { flex: 1; min-width: 0; list-style: none; padding: 1px 14px 0 27px; }
.p-body li { height: 48px; display: flex; align-items: center; gap: 11px; }
.p-body li span { margin-right: auto; white-space: nowrap; margin-left: -2px; }
.av { width: 26px; height: 26px; border-radius: 50%; font-weight: 500; font-size: 13px; line-height: 26px; text-align: center; flex: none; }
.navy { background: #34495e; }
.org { background: #cb5200; }
.blue { background: #3880bf; }
.amb { background: #ec9b00; }
.grn { background: #2f9f80; }
.cl { margin-left: -4px; }
.cl + .sh { margin-left: -3px; }
.p-scroll { width: 15px; flex: none; border-left: 1px solid #3a3a3a; background: #212121; padding: 4px 3px; }
.p-scroll i { display: block; width: 8px; height: 102px; border-radius: 4px; background: #666; }
.people footer { display: flex; justify-content: space-between; padding: 15px 33px 13px 37px; }
.people footer button { background: #2c2b30; border-radius: 6px; height: 24px; padding: 0 8px; }
.people footer button:first-child { padding: 0 13px; }
```
